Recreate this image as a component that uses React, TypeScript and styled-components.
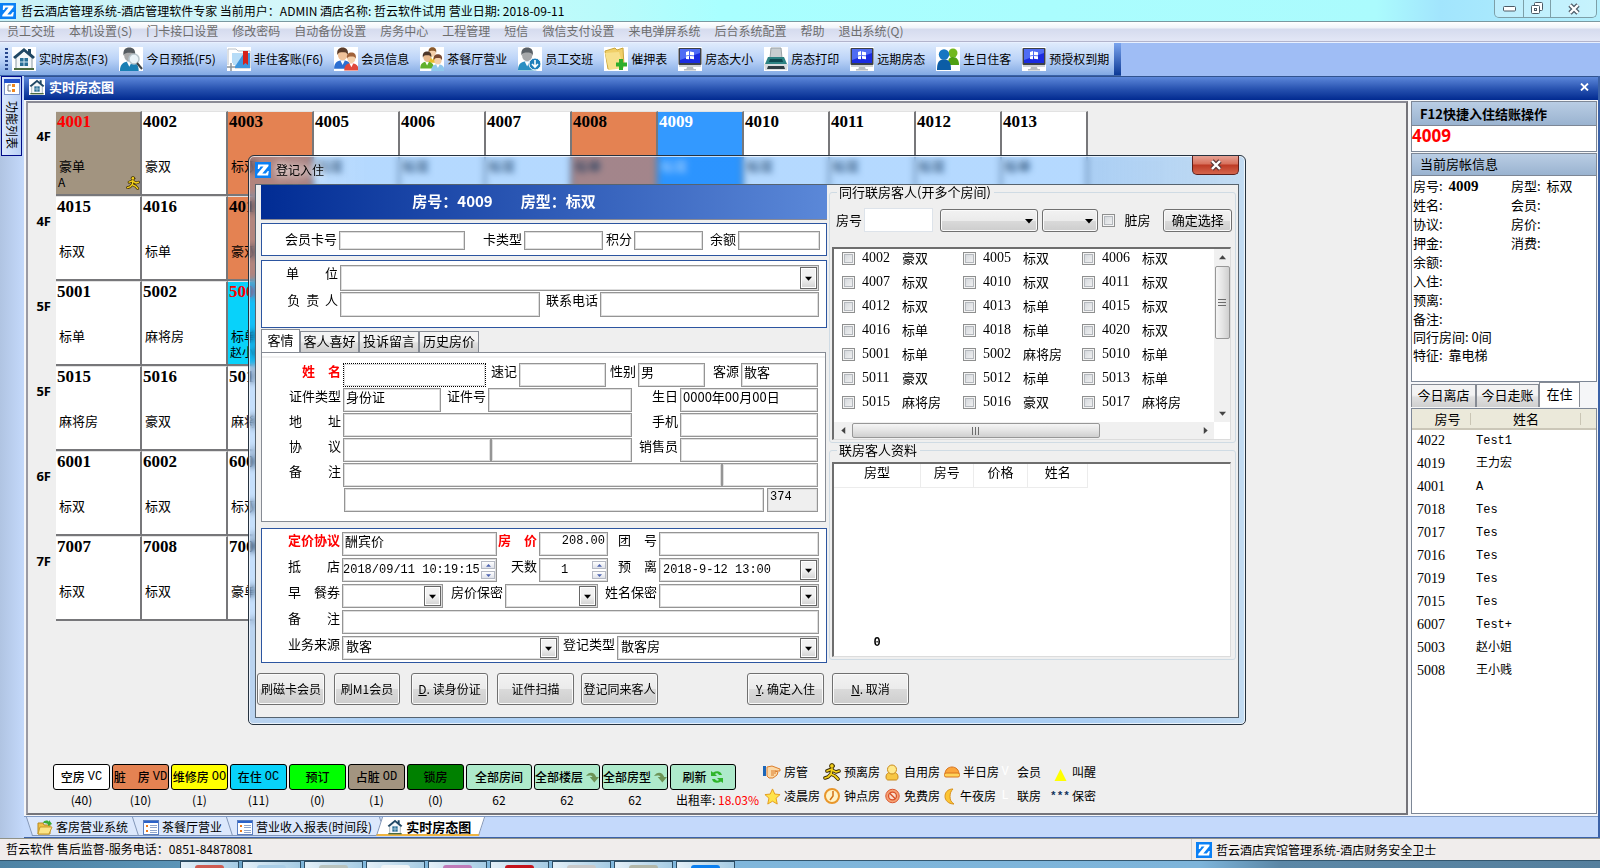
import React, { useId } from "react";
import styled, { createGlobalStyle, css } from "styled-components";

const SANS = '"Noto Sans CJK SC", "Open Sans", sans-serif';
const MONO = '"Liberation Mono", "Noto Sans CJK SC", monospace';
const SERIF = '"Liberation Serif", "Noto Sans CJK SC", serif';

const GlobalStyle = createGlobalStyle`
  * { box-sizing: border-box; }
  body { margin: 0; background: #efefef; font: 13px/18px ${SANS}; color: #000; }
  button, input, select { font: inherit; color: inherit; margin: 0; }
`;

/* ---------- Shell ---------- */

const Page = styled.div`
  position: relative;
  display: flex;
  flex-direction: column;
  min-height: 100vh;
  overflow: hidden;
`;

const TitleBar = styled.header`
  display: flex;
  align-items: center;
  height: 22px;
  border-bottom: 1px solid #7a98a0;
  font-size: 12px;
  white-space: nowrap;
  background: linear-gradient(90deg, #c9f1f8 0%, #d5f8fa 20%, #b9fbfb 38%, #a9ffff 45%, #abfbfd 86%, #a2e5fd 90%, #b4effd 100%);
`;

const TitleText = styled.span`
  flex: 1;
  padding-left: 5px;
`;

const WindowButtons = styled.div`
  display: flex;
  align-self: flex-start;
  margin-right: 3px;
  height: 18px;
  border: 1px solid #7d9fa8;
  border-top: 0;
  border-radius: 0 0 5px 5px;
  overflow: hidden;
`;

const WindowButton = styled.button<{ $w: number }>`
  display: flex;
  align-items: center;
  justify-content: center;
  width: ${(p) => p.$w}px;
  padding: 0;
  border: 0;
  background: rgba(255, 255, 255, 0.25);
  & + & { border-left: 1px solid #7d9fa8; }
`;

const MenuBar = styled.nav`
  display: flex;
  gap: 14px;
  align-items: center;
  height: 20px;
  padding: 0 0 2px 7px;
  font-size: 12px;
  white-space: nowrap;
  border-bottom: 1px solid #b2b4cc;
  background: linear-gradient(#fff 0, #f0f3f9 6px, #d5dbee 7px, #e3e7f6 100%);
`;

const MenuLink = styled.a`
  color: #6d6d6d;
  text-decoration: none;
`;

const ToolbarArea = styled.div`
  height: 34px;
  display: flex;
  background: #9fbdf5;
  border-top: 1px solid #e8f0ff;
`;

const Toolbar = styled.div`
  display: flex;
  align-items: center;
  gap: 11px;
  padding: 0 5px;
  border-bottom: 1px solid #3a62a8;
  background: linear-gradient(#dfebfc, #bcd4f8 50%, #82a9e3);
`;

const Grip = styled.i`
  width: 3px;
  height: 22px;
  margin-right: -7px;
  background: repeating-linear-gradient(#27478c 0 2px, transparent 2px 4px);
`;

const ToolButton = styled.button`
  display: flex;
  align-items: center;
  gap: 3px;
  padding: 0;
  border: 0;
  background: none;
  font-size: 12px;
  white-space: nowrap;
`;

const IconTile = styled.span<{ $size?: number }>`
  display: flex;
  width: ${(p) => p.$size ?? 24}px;
  height: ${(p) => p.$size ?? 24}px;
  background: #fff;
`;

const ToolbarEnd = styled.i`
  width: 7px;
  border-bottom: 1px solid #3a62a8;
  background: linear-gradient(#7aa4ee, #0d3a96);
`;

const Body = styled.div`
  flex: 1;
  display: flex;
`;

const Rail = styled.aside`
  width: 24px;
  padding-left: 1px;
  background: linear-gradient(90deg, #b0c4e2, #c4d9fb);
`;

const RailTab = styled.button`
  display: flex;
  flex-direction: column;
  align-items: center;
  gap: 6px;
  width: 21px;
  height: 80px;
  padding: 2px 0;
  border: 1px solid #000a88;
  background: linear-gradient(90deg, #dbe8fc, #b9d0f5);
  font-size: 12px;
  line-height: 16px;
`;

const RailText = styled.span`
  writing-mode: vertical-rl;
  text-orientation: sideways;
`;

const Workspace = styled.main`
  flex: 1;
  min-width: 0;
  display: flex;
  flex-direction: column;
  border-right: 2px solid #3b62a8;
  background: #f5f6f8;
`;

const DocTitle = styled.div`
  display: flex;
  align-items: center;
  gap: 4px;
  height: 24px;
  padding: 0 7px 3px 5px;
  border-top: 1px solid #31538f;
  color: #fff;
  background: linear-gradient(#5c87da, #2550ae 55%, #012a90);
`;

const DocName = styled.h1`
  flex: 1;
  margin: 0;
  font-size: 13px;
`;

const PlainIconButton = styled.button`
  display: flex;
  padding: 2px;
  border: 0;
  background: none;
`;

const Content = styled.div`
  flex: 1;
  display: flex;
  gap: 3px;
  padding: 1px 1px 1px 2px;
`;

/* ---------- Room board ---------- */

const Board = styled.section`
  flex: 1;
  min-width: 0;
  display: flex;
  flex-direction: column;
  padding-top: 8px;
  border: 2px solid #74747a;
  border-top-color: #8a8a94;
  border-left-color: #9a9aa4;
  background: #efefef;
`;

const FloorRow = styled.div`
  display: flex;
  height: 85px;
`;

const FloorName = styled.div`
  width: 28px;
  padding: 16px 5px 0 0;
  text-align: right;
  font: bold 13px/18px "Open Sans", sans-serif;
`;

type Tone = "free" | "dirty" | "stay" | "stayDirty" | "selected";
const toneBg: Record<Tone, string> = {
  free: "#ffffff",
  dirty: "#e48252",
  stay: "#08d2fa",
  stayDirty: "#a29480",
  selected: "#3399ff",
};

const RoomCell = styled.button<{ $tone: Tone }>`
  position: relative;
  display: flex;
  flex-direction: column;
  width: 86px;
  padding: 0 1px;
  border: solid #77777a;
  border-width: 1px 2px 2px 0;
  border-top-color: #e2e2e2;
  text-align: left;
  background: ${(p) => toneBg[p.$tone]};
  color: ${(p) => (p.$tone === "selected" ? "#fff" : "#000")};
`;

const RoomNo = styled.b<{ $red: boolean }>`
  height: 45px;
  font: bold 17px/20px ${SERIF};
  ${(p) => p.$red && "color: #f00;"}
`;

const RoomKind = styled.span`
  padding-left: 2px;
  line-height: 18px;
`;

const RoomGuest = styled.span`
  padding-left: 1px;
  font-size: 12px;
  line-height: 14px;
`;

const RoomBadge = styled.span`
  position: absolute;
  right: 0;
  bottom: 4px;
  display: flex;
`;

/* ---------- Status legend ---------- */

const Legend = styled.div`
  display: flex;
  margin-top: auto;
  padding: 0 0 4px 25px;
  white-space: nowrap;
`;

const StatusList = styled.div`
  display: flex;
  gap: 2px;
`;

const StatusItem = styled.div<{ $w: number; $start?: boolean }>`
  width: ${(p) => p.$w}px;
  display: flex;
  flex-direction: column;
  align-items: ${(p) => (p.$start ? "flex-start" : "center")};
  gap: 1px;
  font: 12px/18px ${SANS};
  > span { padding-left: ${(p) => (p.$start ? 6 : 0)}px; }
`;

const StatusButton = styled.button<{ $bg: string }>`
  display: flex;
  align-items: center;
  justify-content: center;
  gap: 3px;
  width: 100%;
  height: 26px;
  padding: 0;
  border: 1px solid #000;
  border-radius: 3px;
  background: ${(p) => p.$bg};
  font-size: 12px;
  font-weight: 500;
  white-space: pre;
`;

const Code = styled.span`
  font: 12px/14px ${MONO};
`;

const Rate = styled.span`
  color: #f00;
`;

const MarkGrid = styled.div`
  display: grid;
  grid-template-columns: 60px 60px 61px 52px 55px 50px;
  grid-auto-rows: 24px;
  align-items: center;
  margin-left: 27px;
  margin-top: -4px;
  font-size: 12px;
`;

const Mark = styled.span`
  display: flex;
  align-items: center;
  gap: 3px;
`;

const MarkIcon = styled.span<{ $pale?: boolean }>`
  display: flex;
  align-items: center;
  justify-content: center;
  width: 18px;
  color: ${(p) => (p.$pale ? "#fff" : "#12325c")};
  font: ${(p) => (p.$pale ? "" : "bold")} ${(p) => (p.$pale ? 12 : 11)}px/16px ${MONO};
`;

/* ---------- Side panel ---------- */

const Side = styled.aside`
  width: 186px;
  display: flex;
  flex-direction: column;
`;

const SideHead = styled.h2<{ $strong?: boolean }>`
  margin: 0;
  height: ${(p) => (p.$strong ? 25 : 23)}px;
  padding-left: 8px;
  border: 1px solid #7d8796;
  font-size: 13px;
  line-height: ${(p) => (p.$strong ? 23 : 20)}px;
  font-weight: ${(p) => (p.$strong ? "bold" : "normal")};
  background: linear-gradient(#b9cde4, #9ab3d0);
`;

const RoomInput = styled.input`
  height: 26px;
  margin-bottom: 1px;
  padding: 0 0 6px;
  border: 1px solid #7d8796;
  border-top: 0;
  background: #fff;
  color: #f00;
  font: bold 17px/18px "Open Sans", sans-serif;
  width: 100%;
`;

const InfoBox = styled.div`
  height: 206px;
  padding: 1px 1px 0;
  border: 1px solid #7d8796;
  border-top: 0;
  background: #fff;
`;

const InfoGrid = styled.div<{ $row: number }>`
  display: grid;
  grid-template-columns: 98px 1fr;
  grid-auto-rows: ${(p) => p.$row}px;
  white-space: pre;
  b { font: bold 15px/18px ${SERIF}; }
`;

const Tabs = styled.div<{ $top?: number }>`
  display: flex;
  align-items: flex-end;
  height: ${(p) => p.$top ?? 24}px;
`;

const Tab = styled.button<{ $on?: boolean; $w: number }>`
  width: ${(p) => p.$w}px;
  height: ${(p) => (p.$on ? "100%" : "calc(100% - 2px)")};
  padding: 0 0 3px;
  border: 1px solid #868b94;
  border-bottom: 0;
  line-height: 18px;
  white-space: nowrap;
  background: ${(p) => (p.$on ? "#fff" : "linear-gradient(#f3f3f3 0 45%, #e0e0e0 55%, #cfcfcf)")};
`;

const TableBox = styled.div`
  flex: 1;
  margin: 1px 0 1px;
  border: 1px solid #7d8796;
  background: #fff;
`;

const GuestTable = styled.table`
  width: 100%;
  border-collapse: collapse;
  th {
    height: 20px;
    padding: 0;
    font-weight: normal;
    background: linear-gradient(#c9c5b4, #c9c5b4) no-repeat right 50% / 1px 12px #ebe9da;
    border-bottom: 2px solid #cbc7b8;
  }
  th:first-child { padding-left: 12px; }
  th:last-child { background: #ebe9da; }
  td {
    height: 23px;
    padding: 0 0 0 5px;
    font: 12px/18px ${MONO};
  }
  td:first-child { font: 14px/18px ${SERIF}; }
`;

/* ---------- Bottom bars ---------- */

const DocTabs = styled.nav`
  display: flex;
  height: 22px;
  padding-left: 6px;
  border-top: 1px solid #7f99c4;
  border-bottom: 1px solid #3b62a8;
  background: #c4d9fb;
  font-size: 12px;
`;

const DocTab = styled.a<{ $on?: boolean }>`
  position: relative;
  display: flex;
  align-items: center;
  gap: 3px;
  height: 19px;
  padding: 0 7px;
  margin-right: 1px;
  color: #000;
  text-decoration: none;
  white-space: nowrap;
  font-weight: ${(p) => (p.$on ? "bold" : "normal")};
  font-size: ${(p) => (p.$on ? 13 : 12)}px;
  &::before {
    content: "";
    position: absolute;
    inset: 0 -4px 0 -1px;
    z-index: 0;
    border: 1px solid #8296b8;
    border-top: 0;
    ${(p) => p.$on && "border-bottom: 2px solid #eeb440;"}
    transform: skewX(${(p) => (p.$on ? -18 : 18)}deg);
    background: ${(p) => (p.$on ? "#fff" : "#dce8fc")};
  }
  > * { position: relative; }
`;

const StatusBar = styled.footer`
  display: flex;
  height: 22px;
  border-top: 1px solid #8f9186;
  background: #f0edec;
  font-size: 12px;
  line-height: 20px;
  white-space: nowrap;
`;

const StatusMain = styled.span`
  flex: 1;
  padding-left: 6px;
`;

const StatusBrand = styled.span`
  display: flex;
  align-items: center;
  gap: 4px;
  width: 409px;
  padding-left: 4px;
  border-left: 1px solid #cfcbc8;
`;

const Taskbar = styled.div`
  display: flex;
  gap: 3px;
  height: 8px;
  padding-left: 180px;
  border-top: 1px solid #33566e;
  background: linear-gradient(90deg, #4e83a4 0%, #5a93b6 11%, #82b8dc 20%, #7db4da 75%, #5b87a6 80%, #557f9d 100%);
`;

const TaskButton = styled.i<{ $c: string }>`
  width: 59px;
  height: 7px;
  padding: 3px 14px 0;
  border: 1px solid #2c4c63;
  border-bottom: 0;
  background: linear-gradient(90deg, #e4f0f8, #a5cbe3);
  &::after {
    content: "";
    display: block;
    height: 4px;
    border-radius: 3px 3px 0 0;
    background: ${(p) => p.$c};
  }
`;

/* ---------- Dialog ---------- */

const Dialog = styled.section`
  position: absolute;
  left: 248px;
  top: 155px;
  width: 998px;
  padding: 0 6px 6px;
  border: 1px solid #26323f;
  border-radius: 6px 6px 5px 5px;
  box-shadow: inset 0 0 0 1px rgba(255, 255, 255, 0.7);
  backdrop-filter: blur(3px);
  background: linear-gradient(90deg, rgba(50, 140, 240, 0.28), rgba(30, 140, 255, 0.33) 12%, rgba(30, 140, 255, 0.33) 84%, rgba(150, 200, 245, 0.5));
`;

const DialogTitle = styled.header`
  display: flex;
  align-items: center;
  gap: 5px;
  height: 28px;
  font-size: 12px;
`;

const DialogName = styled.h2`
  flex: 1;
  margin: 0;
  font-size: 12px;
  font-weight: normal;
  text-shadow: 0 0 8px #fff, 0 0 8px #fff;
`;

const CloseButton = styled.button`
  display: flex;
  align-items: center;
  justify-content: center;
  align-self: flex-start;
  width: 47px;
  height: 19px;
  padding: 0;
  border: 1px solid #5c1f1c;
  border-top: 0;
  border-radius: 0 0 5px 5px;
  background: linear-gradient(#e6a193 0, #d8705c 8px, #bd3a25 9px, #d4644c 100%);
`;

const Client = styled.form`
  height: 534px;
  border: 1px solid #56636f;
  background: #efefef;
`;

const Columns = styled.div`
  display: flex;
  gap: 2px;
  padding: 0 2px 0 5px;
`;

const LeftColumn = styled.div`
  width: 566px;
`;

const RightColumn = styled.div`
  flex: 1;
  min-width: 0;
`;

const Banner = styled.div`
  display: flex;
  align-items: center;
  justify-content: center;
  gap: 28px;
  height: 35px;
  margin-bottom: 3px;
  padding: 0 80px 2px 0;
  border-bottom: 1px solid #8a8a94;
  color: #fff;
  font-size: 15px;
  font-weight: bold;
  background: linear-gradient(90deg, #012c94, #5b88d8);
`;

const Card = styled.div<{ $pad: string; $after: number; $gap: number }>`
  display: flex;
  flex-direction: column;
  gap: ${(p) => p.$gap}px;
  padding: ${(p) => p.$pad};
  margin-bottom: ${(p) => p.$after}px;
  border: 1px solid #2c55a0;
  background: #fff;
`;

const TabPanel = styled(Card)`
  margin-right: 1px;
  border-color: #868b94;
  box-shadow: inset 0 3px 0 #fff, inset 0 5px 0 #f1f1f1;
`;

const Row = styled.div<{ $gap?: number }>`
  display: flex;
  gap: ${(p) => p.$gap ?? 0}px;
  align-items: flex-start;
  white-space: nowrap;
`;

const Label = styled.label<{ $w: number; $strong?: boolean }>`
  width: ${(p) => p.$w}px;
  padding-right: 2px;
  text-align: right;
  line-height: 16px;
  white-space: pre;
  ${(p) => p.$strong && "color: #f00; font-weight: bold;"}
`;

const boxCss = css<{ $w: number; $h?: number }>`
  width: ${(p) => p.$w}px;
  height: ${(p) => p.$h ?? 24}px;
  border: 1px solid #959595;
  border-radius: 0;
  box-shadow: inset 0 0 0 1px #dedede;
  background: #fff;
`;

const TextBox = styled.input<{ $w: number; $h?: number; $mono?: boolean; $right?: boolean; $focus?: boolean; $off?: boolean }>`
  ${boxCss}
  padding: 0 2px 7px;
  outline: none;
  font-size: ${(p) => (p.$mono ? 12 : 13)}px;
  line-height: 15px;
  ${(p) => p.$mono && `font-family: ${MONO};`}
  ${(p) => p.$right && "text-align: right;"}
  ${(p) => p.$focus && "border: 1px dotted #000;"}
  ${(p) => p.$off && "background: #efefef;"}
`;

const SelectWrap = styled.span<{ $w: number; $h?: number }>`
  ${boxCss}
  position: relative;
  display: block;
`;

const SelectInput = styled.select<{ $mono?: boolean }>`
  appearance: none;
  width: 100%;
  height: 100%;
  padding: 0 20px 6px 3px;
  border: 0;
  outline: none;
  background: transparent;
  line-height: 16px;
  ${(p) => p.$mono && `font: 12px/16px ${MONO};`}
`;

const DropArrow = styled.span`
  position: absolute;
  top: 1px;
  right: 1px;
  bottom: 1px;
  width: 17px;
  display: flex;
  align-items: center;
  justify-content: center;
  border: 1px solid #666;
  box-shadow: inset 0 0 0 1px #fff;
  background: linear-gradient(#f2f2f2 50%, #d2d2d2);
  pointer-events: none;
`;

const Spinner = styled.span`
  position: absolute;
  top: 2px;
  right: 1px;
  bottom: 2px;
  width: 14px;
  display: flex;
  flex-direction: column;
  gap: 2px;
`;

const SpinButton = styled.button`
  flex: 1;
  display: flex;
  align-items: center;
  justify-content: center;
  padding: 0;
  border: 1px solid #b5b9c4;
  background: linear-gradient(#fff, #dfe2ea);
`;

const SpinField = styled.span<{ $w: number }>`
  ${boxCss}
  position: relative;
  display: block;
`;

const SpinText = styled.input<{ $center?: boolean }>`
  width: 100%;
  height: 100%;
  padding: 0 ${(p) => (p.$center ? 18 : 0)}px 7px 0;
  border: 0;
  outline: none;
  background: transparent;
  font: 12px/15px ${MONO};
  ${(p) => p.$center && "text-align: center;"}
`;

const Group = styled.fieldset`
  min-width: 0;
  margin: 0;
  padding: 0 3px 2px 2px;
  border: 1px solid #cfdbe4;
  border-radius: 3px;
  legend {
    margin-left: 5px;
    padding: 0 3px 0 2px;
    font-size: 13px;
    line-height: 14px;
  }
`;

const FilterRow = styled.div`
  display: flex;
  align-items: center;
  height: 24px;
  margin: 9px 0 15px;
  padding-left: 4px;
  white-space: nowrap;
`;

const FilterInput = styled.input`
  width: 69px;
  height: 24px;
  margin: 0 7px 0 2px;
  border: 1px solid #dde3ea;
  background: #fff;
`;

const buttonCss = css`
  border: 1px solid #707070;
  border-radius: 3px;
  box-shadow: inset 0 0 0 1px #fafafa;
  background: linear-gradient(#f2f2f2, #ebebeb 50%, #dadada 51%, #cdcdcd);
`;

const FilterSelect = styled.span<{ $w: number }>`
  ${buttonCss}
  position: relative;
  width: ${(p) => p.$w}px;
  height: 23px;
  margin-right: 4px;
  select { appearance: none; width: 100%; height: 100%; border: 0; background: transparent; }
  svg { position: absolute; right: 4px; top: 7px; pointer-events: none; }
`;

const PushButton = styled.button<{ $w: number; $h: number }>`
  ${buttonCss}
  width: ${(p) => p.$w}px;
  height: ${(p) => p.$h}px;
  padding: 0;
  white-space: nowrap;
`;

const Check = styled.input.attrs({ type: "checkbox" })`
  appearance: none;
  flex: none;
  width: 13px;
  height: 13px;
  border: 1px solid #8e8f8f;
  box-shadow: inset 0 0 0 1px #f4f4f4, inset 0 0 0 2px #b5b9be;
  background: linear-gradient(135deg, #cfd3d8, #f6f6f6);
`;

const DirtyLabel = styled.label`
  width: 48px;
  padding-left: 9px;
`;

const ListBox = styled.div<{ $h: number }>`
  display: grid;
  grid-template-columns: 1fr 16px;
  grid-template-rows: 1fr 17px;
  height: ${(p) => p.$h}px;
  margin-right: 1px;
  border: 1px solid #dcdcdc;
  border-width: 2px 1px 1px 2px;
  border-top-color: #6e6e6e;
  border-left-color: #6e6e6e;
  background: #fff;
`;

const CheckGrid = styled.div`
  display: grid;
  grid-template-columns: 121px 119px 1fr;
  grid-auto-rows: 18px;
  row-gap: 6px;
  padding-left: 8px;
  white-space: nowrap;
`;

const RoomCheck = styled.label`
  display: grid;
  grid-template-columns: 20px 40px 1fr;
  align-items: center;
`;

const Digits = styled.span`
  font: 14px/18px ${SERIF};
`;

const ScrollTrack = styled.div<{ $across?: boolean }>`
  display: flex;
  flex-direction: ${(p) => (p.$across ? "row" : "column")};
  align-items: center;
  background: #f0f0f0;
`;

const ScrollSpace = styled.span`
  flex: 1;
`;

const ScrollArrow = styled.button`
  display: flex;
  align-items: center;
  justify-content: center;
  width: 18px;
  height: 17px;
  padding: 0;
  border: 0;
  background: none;
`;

const ScrollThumb = styled.span<{ $w: number; $h: number }>`
  display: flex;
  align-items: center;
  justify-content: center;
  width: ${(p) => p.$w}px;
  height: ${(p) => p.$h}px;
  border: 1px solid #979797;
  border-radius: 2px;
  background: linear-gradient(${(p) => (p.$h > p.$w ? "90deg, " : "")}#f5f5f5, #e4e4e4 50%, #cfcfcf);
`;

const GripLines = styled.i<{ $across?: boolean }>`
  width: 8px;
  height: 8px;
  background: repeating-linear-gradient(${(p) => (p.$across ? "90deg" : "180deg")}, #6c6c6c 0 1px, transparent 1px 3px);
`;

const JointBox = styled.div`
  display: flex;
  flex-direction: column;
  justify-content: space-between;
  height: 195px;
  margin: 5px 1px 0 0;
  border: 1px solid #dcdcdc;
  border-width: 2px 1px 1px 2px;
  border-top-color: #6e6e6e;
  border-left-color: #6e6e6e;
  background: #fff;
`;

const JointTable = styled.table`
  width: 254px;
  border-collapse: collapse;
  th {
    height: 23px;
    padding: 0 0 7px;
    border: 1px solid #ececec;
    border-width: 0 1px 1px 0;
    font-weight: normal;
    line-height: 15px;
  }
`;

const JointCount = styled.b`
  width: 86px;
  padding-bottom: 4px;
  text-align: center;
  font: bold 12px/18px ${MONO};
`;

const Actions = styled.div`
  display: flex;
  margin-top: 10px;
  padding-left: 1px;
  font-size: 12px;
`;

const ActionGap = styled.span<{ $w: number }>`
  width: ${(p) => p.$w}px;
`;

/* ---------- Icons ---------- */

const Logo = ({ size = 16 }: { size?: number }) => (
  <svg width={size} height={size} viewBox="0 0 16 16">
    <rect width="16" height="16" fill="#0a80f5" />
    <path d="M3 2.500h10.500v1.600L7.300 11.600h3.500l2-2.600h1l-.7 4.500H2.300v-1.600L8.500 4.500H5.600L4 7H2.800z" fill="#fff" />
  </svg>
);

const HouseIcon = ({ size = 24 }: { size?: number }) => (
  <svg width={size} height={size} viewBox="0 0 24 24">
    <path d="M4 11v11h16V11l-8-7z" fill="#f4f7f9" stroke="#8b9aa5" />
    <path d="M12 1L1 10l2 2 9-7.500 9 7.500 2-2-4-3.400V2h-3v2.400z" fill="#1f4764" />
    <path d="M8 11h8v8H8z" fill="#2a6f96" />
    <path d="M12 11v8M8 15h8" stroke="#cfe6f2" />
    <path d="M2 22h20" stroke="#4a6a40" strokeWidth="2" />
  </svg>
);

type PersonProps = { x: number; y: number; s: number; hair: string; skin: string; body: string };
const Person = ({ x, y, s, hair, skin, body }: PersonProps) => (
  <g transform={`translate(${x} ${y}) scale(${s})`}>
    <path d="M-1 23c0-7 4-9 9-9s9 2 9 9z" fill={body} />
    <path d="M5.500 14h5l-2.500 5z" fill="#fff" />
    <ellipse cx="8" cy="8" rx="5" ry="6" fill={skin} />
    <path d="M2.500 8.500c-1-6 2-8 5.500-8s6.500 2 5.500 8c-1-3-3-3-5.500-3s-4.500 0-5.500 3z" fill={hair} />
  </g>
);

const GuestSearchIcon = () => (
  <svg width="24" height="24" viewBox="0 0 24 24">
    <Person x={2} y={0} s={1.04} hair="#555b60" skin="#a9a9a9" body="#1a7fb4" />
    <circle cx="15" cy="12" r="5" fill="#eaf3f8" stroke="#b8c5cc" strokeWidth="1.500" />
    <path d="M18 16l5 6" stroke="#3a4045" strokeWidth="2" />
  </svg>
);

const LedgerIcon = () => (
  <svg width="24" height="24" viewBox="0 0 24 24">
    <path d="M1 2h8l2 2h12v17H1z" fill="#fff" stroke="#b9c0c8" />
    <path d="M5 6h18v15H5z" fill="#3f97de" />
    <path d="M5 6h12L7 21H5z" fill="#b7dcf7" />
    <path d="M16 4h5v14l-2.500-2-2.500 2z" fill="#d5221b" />
    <path d="M4 16v8M0 20h8" stroke="#fff" strokeWidth="4" />
    <path d="M4 16v8M0 20h8" stroke="#8d949b" strokeWidth="1.500" />
  </svg>
);

const MembersIcon = () => (
  <svg width="24" height="24" viewBox="0 0 24 24">
    <Person x={1} y={0} s={0.95} hair="#5b3d2b" skin="#f0c39b" body="#2c6fd2" />
    <Person x={11} y={5} s={0.8} hair="#a0623a" skin="#f4cfa9" body="#e0483c" />
  </svg>
);

const TeamIcon = () => (
  <svg width="24" height="24" viewBox="0 0 24 24">
    <Person x={7} y={0} s={0.68} hair="#8a5a2c" skin="#f4cfa9" body="#e8bd2a" />
    <Person x={1} y={4} s={0.76} hair="#4d372a" skin="#e8b98c" body="#62b12c" />
    <Person x={12} y={7} s={0.74} hair="#7a4a32" skin="#f4cfa9" body="#8fc7ec" />
  </svg>
);

const ShiftIcon = () => (
  <svg width="24" height="24" viewBox="0 0 24 24">
    <Person x={1} y={0} s={1.02} hair="#5a6066" skin="#a6a8aa" body="#2a8fc2" />
    <circle cx="17" cy="17" r="6" fill="#1f7fbb" stroke="#fff" />
    <path d="M17 13v7M14 17l3 3 3-3" stroke="#fff" strokeWidth="1.600" fill="none" />
  </svg>
);

const FolderAddIcon = () => (
  <svg width="24" height="24" viewBox="0 0 24 24">
    <path d="M1 4l10-3 2 2 6-2 1 18-16 3z" fill="#f0cf68" stroke="#c9a63c" />
    <path d="M1 6l14-1 5 16-15 2z" fill="#f7e08c" />
    <path d="M17 12v11M12 17.500h11" stroke="#2fae2b" strokeWidth="4" />
  </svg>
);

const MonitorIcon = () => (
  <svg width="24" height="24" viewBox="0 0 24 24">
    <rect x="0.500" y="1" width="23" height="17" rx="1" fill="#3c4148" />
    <rect x="2" y="2" width="20" height="14" fill="#1b2ce0" />
    <path d="M2 2h20v4L2 13z" fill="#4f6cf4" />
    <path d="M8 5l3-1v4l-3 .6zM12 4.500l4 .8v3.200L12 8zM8 9.400l3-.6v3.400L8 12zM12 9l4 .2v3l-4-.4z" fill="#fff" />
    <path d="M1 18h22v2H1z" fill="#d0d3d6" />
    <path d="M9 20h6l1 3H8zM6 22h12v1.500H6z" fill="#b8bcc0" />
  </svg>
);

const PrinterIcon = () => (
  <svg width="24" height="24" viewBox="0 0 24 24">
    <path d="M7 1h10l1 10H6z" fill="#c7cdd0" stroke="#9aa2a6" />
    <path d="M4 10h16l3 7H1z" fill="#2d8283" />
    <path d="M6 12h12l1 3H5z" fill="#0c4950" />
    <path d="M0 17h24l-1 6H1z" fill="#d8dcdf" />
    <path d="M4 19h16l1 3H3z" fill="#2e3d44" />
  </svg>
);

const BirthdayIcon = () => (
  <svg width="24" height="24" viewBox="0 0 24 24">
    <circle cx="17" cy="6" r="4.500" fill="#72b81e" />
    <path d="M12 18c0-6 1-8 5-8s6 3 6 8z" fill="#4fa012" />
    <circle cx="8" cy="7.500" r="5.200" fill="#1576c2" />
    <path d="M1 23c0-8 2-10.500 7-10.500S15 15 15 23z" fill="#0c5da6" />
  </svg>
);

const CrossIcon = ({ w = 11, fill = "#fff", edge = "#5a6670" }: { w?: number; fill?: string; edge?: string }) => (
  <svg width={w} height={w} viewBox="0 0 12 12">
    <path d="M2 2l8 8M10 2l-8 8" stroke={edge} strokeWidth="4.600" />
    <path d="M2 2l8 8M10 2l-8 8" stroke={fill} strokeWidth="2.400" />
  </svg>
);

const Arrow = ({ dir = "down", color = "#000", s = 7 }: { dir?: "down" | "up" | "left" | "right"; color?: string; s?: number }) => {
  const turn = { down: 0, left: 90, up: 180, right: 270 }[dir];
  return (
    <svg width={s} height={s} viewBox="0 0 8 8">
      <path d="M0 2h8L4 6.500z" fill={color} transform={`rotate(${turn} 4 4)`} />
    </svg>
  );
};

const RunnerIcon = ({ size = 18 }: { size?: number }) => (
  <svg width={size} height={size} viewBox="0 0 18 18" fill="none" strokeLinecap="round" strokeLinejoin="round">
    <g stroke="#3a2a00" strokeWidth="3.600">
      <path d="M9 6l-1 5 4 2 3 3M8 11l-3 3-3 1M9 6L4 8M9 7l4 2 3-1" />
    </g>
    <circle cx="9" cy="3" r="2.400" fill="#f6d21c" stroke="#3a2a00" />
    <g stroke="#f6d21c" strokeWidth="1.800">
      <path d="M9 6l-1 5 4 2 3 3M8 11l-3 3-3 1M9 6L4 8M9 7l4 2 3-1" />
    </g>
  </svg>
);

const HandIcon = () => (
  <svg width="18" height="14" viewBox="0 0 18 14">
    <path d="M0 1h3v10H0z" fill="#1c66b8" />
    <path d="M4 2l5-1 8 3v2h-5l3 1-1 3-4 3H6l-2-2z" fill="#fbd9a8" stroke="#dc7d2a" />
    <path d="M8 6h4M8 8h5M8 10h3" stroke="#dc7d2a" />
  </svg>
);

const StarIcon = () => (
  <svg width="17" height="17" viewBox="0 0 18 18">
    <path d="M9 1l2.400 5.400L17 7l-4.200 3.800L14 17l-5-3-5 3 1.200-6.200L1 7l5.600-.6z" fill="#ffe34a" stroke="#e39a1c" />
  </svg>
);

const SelfUseIcon = () => (
  <svg width="14" height="17" viewBox="0 0 14 17">
    <path d="M1 13c0-3 2-5 6-5s6 2 6 5c0 2-1 3-2 3H3c-1 0-2-1-2-3z" fill="#f7c744" stroke="#c98a1c" />
    <circle cx="7" cy="5.500" r="4.500" fill="#ffe98a" stroke="#c98a1c" />
  </svg>
);

const HalfDayIcon = () => (
  <svg width="16" height="12" viewBox="0 0 16 12">
    <path d="M1 8c0-4 3-7 7-7s7 3 7 7z" fill="#fba63c" stroke="#d8741c" />
    <rect x="0.500" y="7" width="15" height="4" rx="1.500" fill="#ffd35a" stroke="#d8741c" />
  </svg>
);

const ClockIcon = () => (
  <svg width="16" height="16" viewBox="0 0 16 16">
    <circle cx="8" cy="8" r="7" fill="#fff3c8" stroke="#e8962a" strokeWidth="2" />
    <path d="M9 3v5l-3 4" stroke="#d27216" strokeWidth="1.500" fill="none" />
  </svg>
);

const FreeIcon = () => (
  <svg width="15" height="16" viewBox="0 0 16 16">
    <circle cx="8" cy="8" r="7.200" fill="#f6a274" stroke="#d8512a" />
    <circle cx="8" cy="8" r="4.200" fill="#fbe0cf" stroke="#d8512a" strokeWidth="1.400" />
    <path d="M5 5l6 6" stroke="#d8512a" strokeWidth="1.600" />
  </svg>
);

const MoonIcon = () => (
  <svg width="12" height="17" viewBox="0 0 12 17">
    <path d="M9 1C3 1 1 5 1 8.500S4 16 10 16c-3-2-4-4-4-7.500S7 3 9 1z" fill="#fcc534" stroke="#d8911c" />
  </svg>
);

const TriangleIcon = () => (
  <svg width="13" height="18" viewBox="0 0 13 18">
    <path d="M6.500 6l6 12h-12z" fill="#ff0" />
  </svg>
);

const FolderOpenIcon = () => (
  <svg width="16" height="16" viewBox="0 0 16 16">
    <path d="M1 4h5l1 2h6v9H1z" fill="#f0c044" stroke="#b98a20" />
    <path d="M3 8h12l-3 7H1z" fill="#fce588" stroke="#c79b2c" />
    <path d="M6 4c1-3 5-3 6-1V1l3 4-4 2V5c-2-1-3-1-5-1z" fill="#3aa935" />
  </svg>
);

const ListIcon = () => (
  <svg width="16" height="16" viewBox="0 0 16 16">
    <rect x="0.500" y="1.500" width="15" height="14" fill="#fff" stroke="#5b7fc0" />
    <path d="M1 2h14v2H1z" fill="#2c62c8" />
    <path d="M3 6h2v2H3zM3 11h2v2H3z" fill="#ee7a1c" />
    <path d="M7 6.500h7M7 8.500h7M7 11.500h7M7 13.500h7" stroke="#8ea4cc" />
  </svg>
);

const TreeIcon = () => (
  <svg width="16" height="16" viewBox="0 0 16 16">
    <rect x="0.500" y="0.500" width="15" height="15" fill="#fff" stroke="#7a94cc" />
    <path d="M0 0h16v4H0z" fill="#2554cc" />
    <path d="M4 6h3M4 6v6h3" stroke="#777" fill="none" />
    <path d="M8 5h3v3H8zM8 10h3v3H8z" fill="#f0861c" />
  </svg>
);

const TurnIcon = () => (
  <svg width="13" height="12" viewBox="0 0 14 12">
    <path d="M0 5c3-5 9-5 11 1h3l-5 6-5-6h3C6 4 3 4 0 5z" fill="#6d9457" />
  </svg>
);

const RefreshIcon = () => (
  <svg width="14" height="14" viewBox="0 0 14 14">
    <path d="M1 6V1l2 1.500C7 0 11 1 12 5H9C8 3 6 3 5 4l2 2z" fill="#2fb52a" />
    <path d="M13 8v5l-2-1.500C7 14 3 13 2 9h3c1 2 3 2 4 1L7 8z" fill="#2fb52a" />
  </svg>
);

/* ---------- Form helpers ---------- */

type FieldProps = {
  label: string;
  lw: number;
  w: number;
  h?: number;
  value?: string;
  strong?: boolean;
  mono?: boolean;
  right?: boolean;
  focus?: boolean;
};

const Field = ({ label, lw, w, h, value = "", strong, mono, right, focus }: FieldProps) => {
  const id = useId();
  return (
    <>
      <Label htmlFor={id} $w={lw} $strong={strong}>{label}</Label>
      <TextBox id={id} $w={w} $h={h} $mono={mono} $right={right} $focus={focus} defaultValue={value} />
    </>
  );
};

const Choice = ({ label, lw, w, h, value = "", mono }: FieldProps) => {
  const id = useId();
  return (
    <>
      <Label htmlFor={id} $w={lw}>{label}</Label>
      <SelectWrap $w={w} $h={h}>
        <SelectInput id={id} $mono={mono} defaultValue={value}>
          <option value={value}>{value}</option>
        </SelectInput>
        <DropArrow><Arrow /></DropArrow>
      </SelectWrap>
    </>
  );
};

const Spin = ({ label, lw, w, value, center }: FieldProps & { center?: boolean }) => {
  const id = useId();
  return (
    <>
      <Label htmlFor={id} $w={lw}>{label}</Label>
      <SpinField $w={w}>
        <SpinText id={id} $center={center} defaultValue={value} />
        <Spinner>
          <SpinButton type="button" aria-label="增加"><Arrow dir="up" color="#4c63b0" s={5} /></SpinButton>
          <SpinButton type="button" aria-label="减少"><Arrow color="#4c63b0" s={5} /></SpinButton>
        </Spinner>
      </SpinField>
    </>
  );
};

/* ---------- Data ---------- */

const menu = ["员工交班", "本机设置(S)", "门卡接口设置", "修改密码", "自动备份设置", "房务中心", "工程管理", "短信", "微信支付设置", "来电弹屏系统", "后台系统配置", "帮助", "退出系统(Q)"];

const tools: [string, React.ReactNode][] = [
  ["实时房态(F3)", <HouseIcon />],
  ["今日预抵(F5)", <GuestSearchIcon />],
  ["非住客账(F6)", <LedgerIcon />],
  ["会员信息", <MembersIcon />],
  ["茶餐厅营业", <TeamIcon />],
  ["员工交班", <ShiftIcon />],
  ["催押表", <FolderAddIcon />],
  ["房态大小", <MonitorIcon />],
  ["房态打印", <PrinterIcon />],
  ["远期房态", <MonitorIcon />],
  ["生日住客", <BirthdayIcon />],
  ["预授权到期", <MonitorIcon />],
];

type Room = { no: string; kind: string; tone?: Tone; guest?: string; leaving?: boolean };
const floors: { name: string; rooms: Room[] }[] = [
  {
    name: "4F",
    rooms: [
      { no: "4001", kind: "豪单", tone: "stayDirty", guest: "A", leaving: true },
      { no: "4002", kind: "豪双" },
      { no: "4003", kind: "标双", tone: "dirty" },
      { no: "4005", kind: "标双" },
      { no: "4006", kind: "标双" },
      { no: "4007", kind: "标双" },
      { no: "4008", kind: "标单", tone: "dirty" },
      { no: "4009", kind: "标双", tone: "selected" },
      { no: "4010", kind: "标双" },
      { no: "4011", kind: "标双" },
      { no: "4012", kind: "标双" },
      { no: "4013", kind: "标单" },
    ],
  },
  { name: "4F", rooms: [{ no: "4015", kind: "标双" }, { no: "4016", kind: "标单" }, { no: "4017", kind: "豪双", tone: "dirty" }] },
  { name: "5F", rooms: [{ no: "5001", kind: "标单" }, { no: "5002", kind: "麻将房" }, { no: "5003", kind: "标单", tone: "stay", guest: "赵小姐" }] },
  { name: "5F", rooms: [{ no: "5015", kind: "麻将房" }, { no: "5016", kind: "豪双" }, { no: "5017", kind: "麻将房" }] },
  { name: "6F", rooms: [{ no: "6001", kind: "标双" }, { no: "6002", kind: "标双" }, { no: "6003", kind: "标双" }] },
  { name: "7F", rooms: [{ no: "7007", kind: "标双" }, { no: "7008", kind: "标双" }, { no: "7009", kind: "豪单" }] },
];

const statuses: { text: string; code?: string; bg: string; n: string; w: number; icon?: React.ReactNode }[] = [
  { text: "空房", code: "VC", bg: "#fff", n: "(40)", w: 57 },
  { text: "脏　房", code: "VD", bg: "#e48252", n: "(10)", w: 57 },
  { text: "维修房", code: "OO", bg: "#ff0", n: "(1)", w: 57 },
  { text: "在住", code: "OC", bg: "#08d2fa", n: "(11)", w: 57 },
  { text: "预订", bg: "#00ff00", n: "(0)", w: 57 },
  { text: "占脏", code: "OD", bg: "#a29480", n: "(1)", w: 57 },
  { text: "锁房", bg: "#008000", n: "(0)", w: 57 },
  { text: "全部房间", bg: "#aeeacb", n: "62", w: 66 },
  { text: "全部楼层", bg: "#aeeacb", n: "62", w: 66, icon: <TurnIcon /> },
  { text: "全部房型", bg: "#aeeacb", n: "62", w: 66, icon: <TurnIcon /> },
];

const marks: [string, React.ReactNode, boolean?][] = [
  ["房管", <HandIcon />],
  ["预离房", <RunnerIcon />],
  ["自用房", <SelfUseIcon />],
  ["半日房", <HalfDayIcon />],
  ["会员", "V", true],
  ["叫醒", <TriangleIcon />],
  ["凌晨房", <StarIcon />],
  ["钟点房", <ClockIcon />],
  ["免费房", <FreeIcon />],
  ["午夜房", <MoonIcon />],
  ["联房", "L", true],
  ["保密", "***"],
];

const checkRooms = [
  "4002 豪双", "4005 标双", "4006 标双",
  "4007 标双", "4010 标双", "4011 标双",
  "4012 标双", "4013 标单", "4015 标双",
  "4016 标单", "4018 标单", "4020 标双",
  "5001 标单", "5002 麻将房", "5010 标单",
  "5011 豪双", "5012 标单", "5013 标单",
  "5015 麻将房", "5016 豪双", "5017 麻将房",
];

const guests = [
  ["4022", "Test1"], ["4019", "王力宏"], ["4001", "A"], ["7018", "Tes"], ["7017", "Tes"], ["7016", "Tes"],
  ["7019", "Tes"], ["7015", "Tes"], ["6007", "Test+"], ["5003", "赵小姐"], ["5008", "王小贱"],
];

const taskColors = ["#cf5b50", "#a9cde6", "#b9c2bc", "#f0f4f6", "#c07ab8", "#c5141c", "#c9c9c9", "#b3b7a8", "#0a7ff0"];

/* ---------- Sections ---------- */

const CheckInDialog = () => (
  <Dialog role="dialog" aria-labelledby="checkin-title">
    <DialogTitle>
      <Logo />
      <DialogName id="checkin-title">登记入住</DialogName>
      <CloseButton type="button" aria-label="关闭"><CrossIcon w={12} edge="#5d3a3a" /></CloseButton>
    </DialogTitle>
    <Client>
      <Columns>
        <LeftColumn>
          <Banner><span>房号：4009</span><span>房型：标双</span></Banner>
          <Card $pad="7px 0 5px" $after={4} $gap={0}>
            <Row>
              <Field label="会员卡号" lw={77} w={126} h={19} />
              <Field label="卡类型" lw={59} w={79} h={19} />
              <Field label="积分" lw={31} w={69} h={19} />
              <Field label="余额" lw={35} w={82} h={19} />
            </Row>
          </Card>
          <Card $pad="4px 0 10px" $after={1} $gap={1}>
            <Row><Choice label="单　　位" lw={78} w={479} h={26} /></Row>
            <Row>
              <Field label={"负\u00a0\u00a0责\u00a0\u00a0人"} lw={78} w={200} h={25} />
              <Field label="联系电话" lw={60} w={219} h={25} />
            </Row>
          </Card>
          <Tabs $top={23} role="tablist">
            <Tab type="button" role="tab" $on $w={39}>客情</Tab>
            <Tab type="button" role="tab" $w={59}>客人喜好</Tab>
            <Tab type="button" role="tab" $w={60}>投诉留言</Tab>
            <Tab type="button" role="tab" $w={60}>历史房价</Tab>
          </Tabs>
          <TabPanel $pad="10px 0 9px" $after={6} $gap={1}>
            <Row>
              <Field label="姓　名" strong lw={81} w={143} focus />
              <Field label="速记" lw={33} w={87} />
              <Field label="性别" lw={32} w={67} value="男" />
              <Field label="客源" lw={36} w={77} value="散客" />
            </Row>
            <Row>
              <Field label="证件类型" lw={81} w={98} value="身份证" />
              <Field label="证件号" lw={47} w={144} />
              <Field label="生日" lw={48} w={138} value="0000年00月00日" />
            </Row>
            <Row>
              <Field label="地　　址" lw={81} w={289} />
              <Field label="手机" lw={48} w={138} />
            </Row>
            <Row>
              <Field label="协　　议" lw={81} w={148} />
              <TextBox $w={141} aria-label="协议名称" />
              <Field label="销售员" lw={48} w={138} />
            </Row>
            <Row>
              <Field label="备　　注" lw={81} w={379} />
              <TextBox $w={96} aria-label="备注类别" />
            </Row>
            <Row $gap={3}>
              <Label as="span" $w={79} />
              <TextBox $w={420} aria-label="补充备注" />
              <TextBox $w={51} $mono $off readOnly aria-label="编号" defaultValue="374" />
            </Row>
          </TabPanel>
          <Card $pad="3px 0 2px" $after={0} $gap={2}>
            <Row>
              <Field label="定价协议" strong lw={80} w={155} value="酬宾价" />
              <Field label="房　价" strong lw={42} w={69} value="208.00" mono right />
              <Field label="团　号" lw={51} w={160} />
            </Row>
            <Row>
              <Spin label="抵　　店" lw={80} w={155} value="2018/09/11 10:19:15" />
              <Spin label="天数" lw={42} w={69} value="1" center />
              <Choice label="预　离" lw={51} w={160} value="2018-9-12 13:00" mono />
            </Row>
            <Row>
              <Choice label="早　餐券" lw={80} w={101} />
              <Choice label="房价保密" lw={62} w={93} />
              <Choice label="姓名保密" lw={61} w={160} />
            </Row>
            <Row><Field label="备　　注" lw={80} w={477} /></Row>
            <Row>
              <Choice label="业务来源" lw={80} w={217} value="散客" />
              <Choice label="登记类型" lw={58} w={202} value="散客房" />
            </Row>
          </Card>
        </LeftColumn>
        <RightColumn>
          <Group>
            <legend>同行联房客人(开多个房间)</legend>
            <FilterRow>
              <label htmlFor="filter-room">房号</label>
              <FilterInput id="filter-room" />
              <FilterSelect $w={98}><select aria-label="房型筛选" /><Arrow s={8} /></FilterSelect>
              <FilterSelect $w={57}><select aria-label="楼层筛选" /><Arrow s={8} /></FilterSelect>
              <Check id="filter-dirty" />
              <DirtyLabel htmlFor="filter-dirty">脏房</DirtyLabel>
              <PushButton type="button" $w={69} $h={23}>确定选择</PushButton>
            </FilterRow>
            <ListBox $h={193}>
              <CheckGrid>
                {checkRooms.map((r) => {
                  const [no, kind] = r.split(" ");
                  return (
                    <RoomCheck key={no}>
                      <Check /><Digits>{no}</Digits><span>{kind}</span>
                    </RoomCheck>
                  );
                })}
              </CheckGrid>
              <ScrollTrack>
                <ScrollArrow type="button" aria-label="上"><Arrow dir="up" color="#444" /></ScrollArrow>
                <ScrollThumb $w={15} $h={73}><GripLines /></ScrollThumb>
                <ScrollSpace />
                <ScrollArrow type="button" aria-label="下"><Arrow color="#444" /></ScrollArrow>
              </ScrollTrack>
              <ScrollTrack $across>
                <ScrollArrow type="button" aria-label="左"><Arrow dir="left" color="#444" /></ScrollArrow>
                <ScrollThumb $w={248} $h={15}><GripLines $across /></ScrollThumb>
                <ScrollSpace />
                <ScrollArrow type="button" aria-label="右"><Arrow dir="right" color="#444" /></ScrollArrow>
              </ScrollTrack>
            </ListBox>
          </Group>
          <Group>
            <legend>联房客人资料</legend>
            <JointBox>
              <JointTable>
                <colgroup><col width="87" /><col width="53" /><col width="55" /><col width="60" /></colgroup>
                <thead><tr><th>房型</th><th>房号</th><th>价格</th><th>姓名</th></tr></thead>
              </JointTable>
              <JointCount>0</JointCount>
            </JointBox>
          </Group>
        </RightColumn>
      </Columns>
      <Actions>
        <PushButton type="button" $w={68} $h={32}>刷磁卡会员</PushButton>
        <ActionGap $w={9} />
        <PushButton type="button" $w={66} $h={32}>刷M1会员</PushButton>
        <ActionGap $w={11} />
        <PushButton type="button" $w={77} $h={32}><u>D</u>. 读身份证</PushButton>
        <ActionGap $w={9} />
        <PushButton type="button" $w={77} $h={32}>证件扫描</PushButton>
        <ActionGap $w={7} />
        <PushButton type="button" $w={77} $h={32}>登记同来客人</PushButton>
        <ActionGap $w={89} />
        <PushButton type="button" $w={77} $h={32}><u>Y</u>. 确定入住</PushButton>
        <ActionGap $w={8} />
        <PushButton type="button" $w={77} $h={32}><u>N</u>. 取消</PushButton>
      </Actions>
    </Client>
  </Dialog>
);

const RoomBoard = () => (
  <Board>
    {floors.map((f, i) => (
      <FloorRow key={i}>
        <FloorName>{f.name}</FloorName>
        {f.rooms.map((r) => (
          <RoomCell key={r.no} type="button" $tone={r.tone ?? "free"}>
            <RoomNo $red={!!r.guest}>{r.no}</RoomNo>
            <RoomKind>{r.kind}</RoomKind>
            {r.guest && <RoomGuest>{r.guest}</RoomGuest>}
            {r.leaving && <RoomBadge><RunnerIcon size={14} /></RoomBadge>}
          </RoomCell>
        ))}
      </FloorRow>
    ))}
    <Legend>
      <StatusList>
        {statuses.map((s) => (
          <StatusItem key={s.text} $w={s.w}>
            <StatusButton type="button" $bg={s.bg}>
              {s.text}
              {s.code && <Code>{s.code}</Code>}
              {s.icon}
            </StatusButton>
            <span>{s.n}</span>
          </StatusItem>
        ))}
        <StatusItem $w={66} $start>
          <StatusButton type="button" $bg="#aeeacb">刷新<RefreshIcon /></StatusButton>
          <span>出租率: <Rate>18.03%</Rate></span>
        </StatusItem>
      </StatusList>
      <MarkGrid>
        {marks.map(([text, icon, pale]) => (
          <Mark key={text}><MarkIcon $pale={pale}>{icon}</MarkIcon>{text}</Mark>
        ))}
      </MarkGrid>
    </Legend>
  </Board>
);

const SidePanel = () => (
  <Side>
    <SideHead $strong>F12快捷入住结账操作</SideHead>
    <RoomInput aria-label="快捷房号" defaultValue="4009" />
    <SideHead>当前房帐信息</SideHead>
    <InfoBox>
      <InfoGrid $row={19}>
        <span>房号:  <b>4009</b></span><span>房型:  标双</span>
        <span>姓名:</span><span>会员:</span>
        <span>协议:</span><span>房价:</span>
        <span>押金:</span><span>消费:</span>
        <span>余额:</span><span />
        <span>入住:</span><span />
        <span>预离:</span><span />
      </InfoGrid>
      <InfoGrid $row={18}>
        <span>备注:</span><span />
        <span>同行房间: 0间</span><span />
        <span>特征:  靠电梯</span><span />
      </InfoGrid>
    </InfoBox>
    <Tabs $top={25} role="tablist">
      <Tab type="button" role="tab" $w={65}>今日离店</Tab>
      <Tab type="button" role="tab" $w={63}>今日走账</Tab>
      <Tab type="button" role="tab" $on $w={41}>在住</Tab>
    </Tabs>
    <TableBox>
      <GuestTable>
        <colgroup><col width="59" /><col /><col width="15" /></colgroup>
        <thead><tr><th>房号</th><th>姓名</th><th /></tr></thead>
        <tbody>
          {guests.map(([no, name]) => <tr key={no}><td>{no}</td><td colSpan={2}>{name}</td></tr>)}
        </tbody>
      </GuestTable>
    </TableBox>
  </Side>
);

export default function App() {
  return (
    <Page>
      <GlobalStyle />
      <TitleBar>
        <Logo />
        <TitleText>哲云酒店管理系统-酒店管理软件专家 当前用户：ADMIN 酒店名称: 哲云软件试用 营业日期: 2018-09-11</TitleText>
        <WindowButtons>
          <WindowButton $w={28} type="button" aria-label="最小化">
            <svg width="13" height="6"><rect x="0.500" y="0.500" width="12" height="4.500" rx="1" fill="#fff" stroke="#4c5a66" /></svg>
          </WindowButton>
          <WindowButton $w={27} type="button" aria-label="还原">
            <svg width="13" height="13" fill="#fff" stroke="#4c5a66">
              <rect x="3.500" y="0.500" width="8" height="8" rx="1" />
              <rect x="0.500" y="3.500" width="8" height="8" rx="1" />
              <rect x="3.500" y="6.500" width="2" height="2" />
            </svg>
          </WindowButton>
          <WindowButton $w={46} type="button" aria-label="关闭"><CrossIcon w={12} edge="#4c5a66" /></WindowButton>
        </WindowButtons>
      </TitleBar>
      <MenuBar>{menu.map((m) => <MenuLink key={m} href="#">{m}</MenuLink>)}</MenuBar>
      <ToolbarArea>
        <Toolbar>
          <Grip />
          {tools.map(([text, icon]) => (
            <ToolButton key={text} type="button"><IconTile>{icon}</IconTile>{text}</ToolButton>
          ))}
        </Toolbar>
        <ToolbarEnd />
      </ToolbarArea>
      <Body>
        <Rail>
          <RailTab type="button"><TreeIcon /><RailText>功能列表</RailText></RailTab>
        </Rail>
        <Workspace>
          <DocTitle>
            <IconTile $size={16}><HouseIcon size={16} /></IconTile>
            <DocName>实时房态图</DocName>
            <PlainIconButton type="button" aria-label="关闭">
              <svg width="9" height="8" viewBox="0 0 9 8"><path d="M1 0.500l7 7M8 0.500l-7 7" stroke="#fff" strokeWidth="1.800" /></svg>
            </PlainIconButton>
          </DocTitle>
          <Content>
            <RoomBoard />
            <SidePanel />
          </Content>
          <DocTabs>
            <DocTab href="#"><FolderOpenIcon /><span>客房营业系统</span></DocTab>
            <DocTab href="#"><ListIcon /><span>茶餐厅营业</span></DocTab>
            <DocTab href="#"><ListIcon /><span>营业收入报表(时间段)</span></DocTab>
            <DocTab href="#" $on><HouseIcon size={16} /><span>实时房态图</span></DocTab>
          </DocTabs>
        </Workspace>
      </Body>
      <StatusBar>
        <StatusMain>哲云软件 售后监督-服务电话：0851-84878081</StatusMain>
        <StatusBrand><Logo />哲云酒店宾馆管理系统-酒店财务安全卫士</StatusBrand>
      </StatusBar>
      <Taskbar>{taskColors.map((c) => <TaskButton key={c} $c={c} />)}</Taskbar>
      <CheckInDialog />
    </Page>
  );
}
